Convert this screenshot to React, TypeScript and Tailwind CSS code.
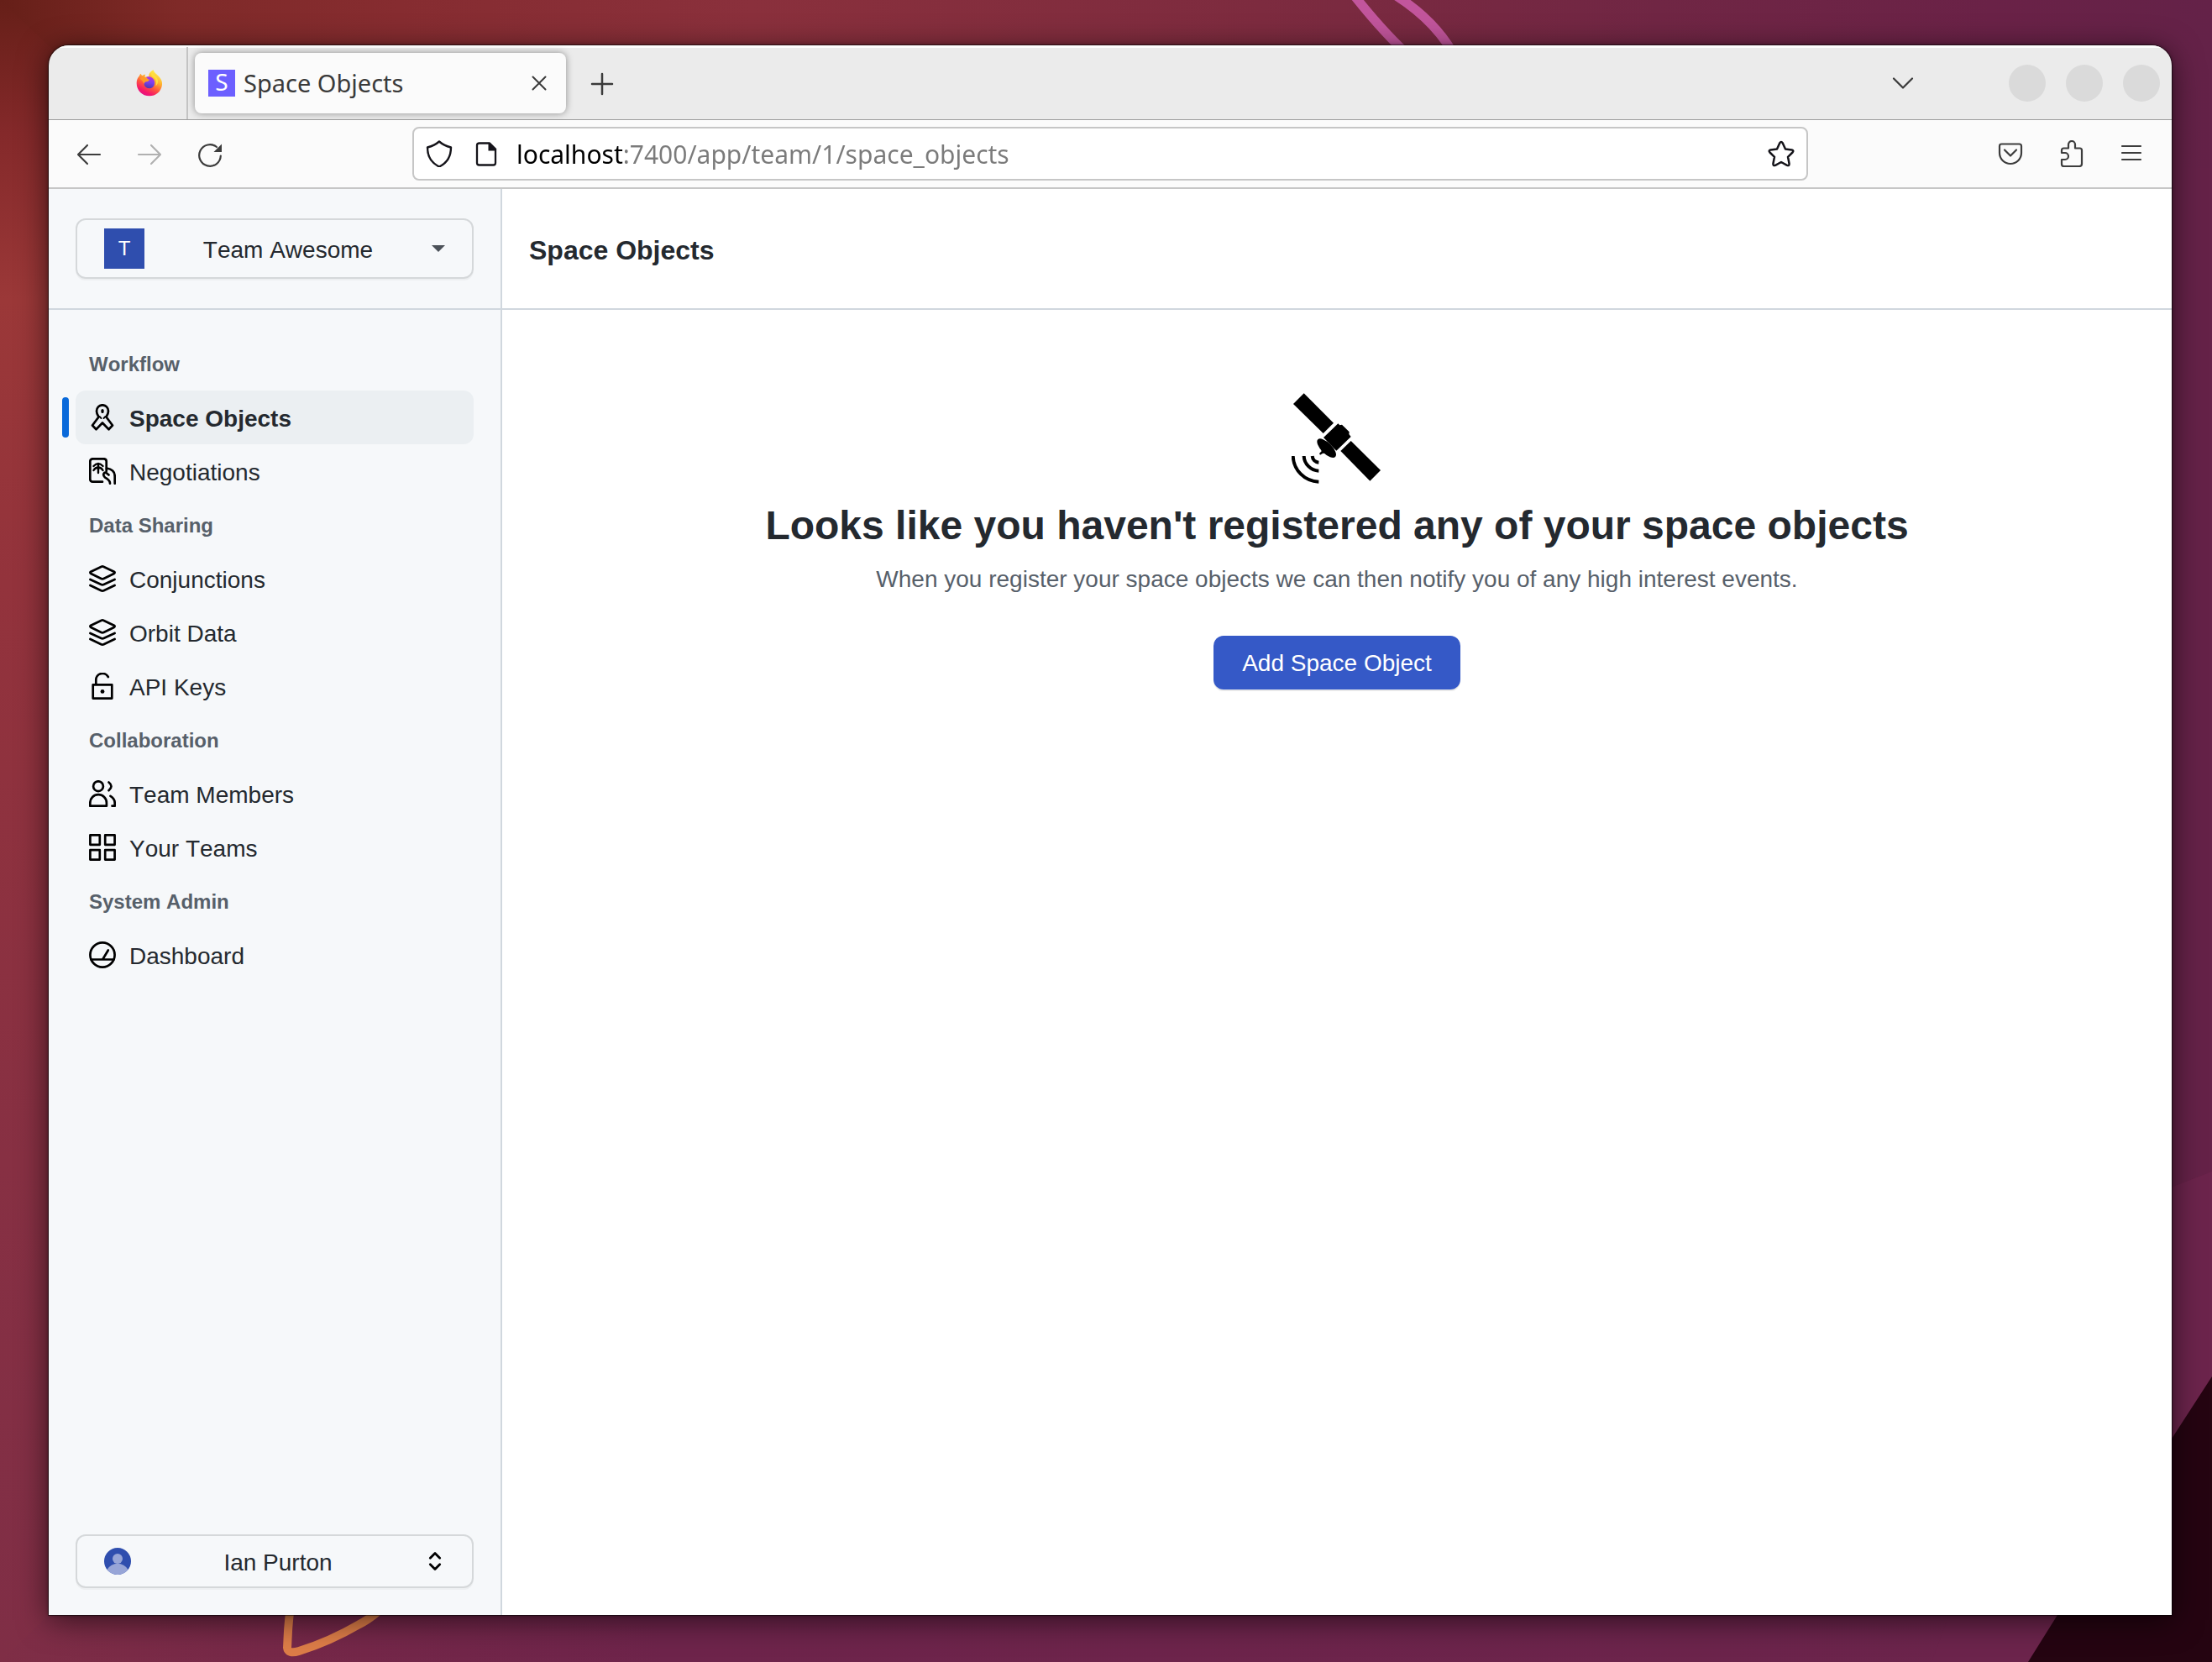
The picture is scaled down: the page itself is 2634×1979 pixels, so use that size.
import type { ReactNode } from "react";

function Icon({ children, className = "" }: { children: ReactNode; className?: string }) {
  return (
    <svg
      viewBox="0 0 32 32"
      className={`size-8 shrink-0 ${className}`}
      fill="none"
      stroke="currentColor"
      strokeWidth="2.7"
      strokeLinecap="round"
      strokeLinejoin="round"
      aria-hidden="true"
    >
      {children}
    </svg>
  );
}

/* ---------- Wallpaper ---------- */

function Wallpaper() {
  return (
    <svg
      className="absolute inset-0 size-full"
      viewBox="0 0 2634 1979"
      preserveAspectRatio="none"
      aria-hidden="true"
    >
      <defs>
        <linearGradient id="left" x1="0" y1="0" x2="0" y2="1">
          <stop offset="0" stopColor="#661f18" />
          <stop offset="0.08" stopColor="#84292a" />
          <stop offset="0.18" stopColor="#9b3838" />
          <stop offset="0.35" stopColor="#93333c" />
          <stop offset="0.7" stopColor="#873043" />
          <stop offset="1" stopColor="#7f2e46" />
        </linearGradient>
        <linearGradient id="top" x1="0" y1="0" x2="1" y2="0">
          <stop offset="0" stopColor="#661f18" />
          <stop offset="0.08" stopColor="#7f2a28" />
          <stop offset="0.18" stopColor="#862c30" />
          <stop offset="0.34" stopColor="#8a303c" />
          <stop offset="0.57" stopColor="#7d2b3f" />
          <stop offset="0.75" stopColor="#702644" />
          <stop offset="0.9" stopColor="#6a2247" />
          <stop offset="1" stopColor="#642248" />
        </linearGradient>
        <linearGradient id="bottom" x1="0" y1="0" x2="1" y2="0">
          <stop offset="0" stopColor="#7f2e46" />
          <stop offset="0.12" stopColor="#762848" />
          <stop offset="0.3" stopColor="#6e244b" />
          <stop offset="1" stopColor="#6b244c" />
        </linearGradient>
      </defs>
      <rect width="2634" height="1979" fill="#68234a" />
      <rect width="2634" height="300" fill="url(#top)" />
      <rect y="1850" width="2634" height="129" fill="url(#bottom)" />
      <path d="M0 0L64 60V1917L0 1979Z" fill="url(#left)" />
      <path d="M2500 200H2634V1395L2500 1447Z" fill="#652248" />
      <path d="M2500 1447L2634 1395V1979H2300Z" fill="#6c244c" />
      <path d="M2634 1639V1979H2415L2450 1923Z" fill="#250411" />
      <g fill="none" stroke="#c2559c" strokeWidth="11">
        <path d="M1612 -6Q1650 42 1682 70" />
        <path d="M1661 -6Q1712 26 1735 72" />
      </g>
      <path
        d="M348 1900C342 1935 343 1948 342 1962Q343 1970 356 1966C385 1957 404 1948 428 1934Q446 1925 468 1902"
        fill="none"
        stroke="#dd7d48"
        strokeWidth="10"
      />
    </svg>
  );
}

/* ---------- Browser chrome ---------- */

function FirefoxLogo() {
  return (
    <svg viewBox="0 0 96 96" className="size-8" aria-label="Firefox">
      <defs>
        <linearGradient id="ffBody" x1="0.8" y1="0.05" x2="0.3" y2="1">
          <stop offset="0" stopColor="#fff44f" />
          <stop offset="0.35" stopColor="#ffb02e" />
          <stop offset="0.6" stopColor="#ff5a3c" />
          <stop offset="0.85" stopColor="#f5156c" />
          <stop offset="1" stopColor="#e01587" />
        </linearGradient>
        <linearGradient id="ffGlobe" x1="0.6" y1="0" x2="0.4" y2="1">
          <stop offset="0" stopColor="#b833e1" />
          <stop offset="0.5" stopColor="#7a3ff0" />
          <stop offset="1" stopColor="#4b3aa8" />
        </linearGradient>
      </defs>
      <path
        d="M62 1C64 10 72 15 79 22C92 34 94 46 93 54C90 79 70 94 48 94C22 94 2 74 2 48C2 36 6 29 12 22C12 19 15 15 18 14C18 18 20 20 23 21C26 18 31 17 34 17C32 20 31 23 32 26L46 24C44 14 54 4 62 1Z"
        fill="url(#ffBody)"
      />
      <path d="M36 27C44 22 58 24 64 36C70 50 64 66 48 67C36 67 27 58 29 46C33 40 40 42 44 39C46 36 42 33 36 27Z" fill="url(#ffGlobe)" />
      <path d="M14 32C20 26 28 26 34 30C38 33 44 34 48 35C46 41 40 42 36 43C30 44 30 50 28 50C26 42 20 36 14 32Z" fill="#ff9a26" />
      <path d="M58 6C52 14 54 22 62 27C74 35 74 48 70 58C82 50 80 32 70 24C63 18 60 13 58 6Z" fill="#ffdf3d" />
    </svg>
  );
}

function TabStrip() {
  return (
    <div className="flex h-[89px] items-stretch border-b border-[#9e9e9e] bg-[#ebebeb] pt-0.5 pr-[14px] text-[#3a3a3a] shadow-[inset_0_3px_0_#fdfdfd]">
      <div className="flex w-[166px] items-center justify-end border-r-2 border-[#c4c4c4] pr-7">
        <FirefoxLogo />
      </div>
      <div
        role="tab"
        aria-selected="true"
        className="ml-2 flex w-[442px] items-center self-center rounded-lg bg-[#fbfbfb] px-4 py-5 shadow-[0_0_8px_rgba(0,0,0,0.4)]"
      >
        <span className="flex size-8 items-center justify-center bg-[#6c5fff] pb-1 font-['Noto_Sans'] text-[28px] leading-8 text-white">
          S
        </span>
        <span className="ml-[10px] flex-1 font-['Noto_Sans'] text-[29px] leading-8">Space Objects</span>
        <button type="button" aria-label="Close tab" className="size-8">
          <Icon>
            <path strokeWidth="2" d="M8.500 8.500L23.500 23.500M23.500 8.500L8.500 23.500" />
          </Icon>
        </button>
      </div>
      <button type="button" aria-label="New tab" className="ml-[27px] self-center">
        <Icon>
          <path strokeWidth="2.500" d="M16 5V29M4 17H28" />
        </Icon>
      </button>
      <div className="flex-1" />
      <button type="button" aria-label="List all tabs" className="self-center">
        <Icon>
          <path strokeWidth="2.200" d="M5 10.500L16 21.500L27 10.500" />
        </Icon>
      </button>
      <div className="ml-[110px] flex items-center gap-6">
        {["Minimize", "Maximize", "Close"].map((label) => (
          <button key={label} type="button" aria-label={label} className="size-11 rounded-full bg-[#dadada]" />
        ))}
      </div>
    </div>
  );
}

function Toolbar() {
  return (
    <div className="flex h-[82px] items-center border-b-2 border-[#c6c6c6] bg-[#fbfbfb] px-8 text-[#3d3d3d]">
      <div className="flex gap-10">
        <button type="button" aria-label="Back">
          <Icon>
            <path strokeWidth="2.200" d="M29 17H3M14 6L3 17L14 28" />
          </Icon>
        </button>
        <button type="button" aria-label="Forward" disabled className="text-[#b0b0b0]">
          <Icon>
            <path strokeWidth="2.200" d="M3 17H29M18 6L29 17L18 28" />
          </Icon>
        </button>
        <button type="button" aria-label="Reload">
          <Icon>
            <path strokeWidth="2.200" d="M28.800 18.500A12.800 12.800 0 1 1 24 8" />
            <path fill="currentColor" stroke="none" d="M30 4.500V14H20.500Z" />
          </Icon>
        </button>
      </div>
      <div className="mx-[225px] flex h-16 flex-1 items-center rounded-lg border-2 border-[#c6c6c6] bg-white px-[14px] text-[#15141a]">
        <Icon>
          <path strokeWidth="2.400" d="M16 1.500C20 5 24.500 7 30 8.500C30 19 26.500 26.500 16 31.500C5.500 26.500 2 19 2 8.500C7.500 7 12 5 16 1.500Z" />
        </Icon>
        <Icon className="ml-6">
          <path strokeWidth="2.300" d="M8 3.500H20L27 10.500V27Q27 29.500 24.500 29.500H7.500Q5 29.500 5 27V6Q5 3.500 8 3.500Z" />
          <path fill="currentColor" stroke="none" d="M18.500 3H20.500L28 10.500V12.500H18.500Z" />
        </Icon>
        <input
          type="text"
          aria-label="Address"
          readOnly
          value="localhost:7400/app/team/1/space_objects"
          className="ml-5 min-w-0 flex-1 bg-[linear-gradient(to_right,#000_127px,#7b7b7b_127px)] bg-clip-text pt-0.5 font-['Noto_Sans'] text-[30px] leading-10 text-transparent outline-none"
        />
        <button type="button" aria-label="Bookmark this page">
          <Icon>
            <path
              strokeWidth="2.500"
              d="M14.300 3.200Q16 0.800 17.700 3.200L21 10.500L28.600 11.400Q31.500 12.300 29.500 14.500L24 19.800L25.600 28Q25.600 30.800 23 29.900L16 26L9 29.900Q6.400 30.800 6.400 28L8 19.800L2.500 14.500Q0.500 12.300 3.400 11.400L11 10.500Z"
            />
          </Icon>
        </button>
      </div>
      <div className="flex gap-10">
        <button type="button" aria-label="Save to Pocket">
          <Icon>
            <path strokeWidth="2.200" d="M5.500 4.500H26.500Q29 4.500 29 7V15A13 13 0 0 1 3 15V7Q3 4.500 5.500 4.500Z" />
            <path strokeWidth="2.200" d="M9 11.500L16 18.500L23 11.500" />
          </Icon>
        </button>
        <button type="button" aria-label="Extensions">
          <Icon>
            <path
              strokeWidth="2.200"
              d="M13 9.500V5A4 4 0 0 1 21 5V9.500H26.500Q29 9.500 29 12V28Q29 31 26 31H7.500Q5 31 5 28.500V23H9A4 4 0 0 0 9 15H5V12Q5 9.500 7.500 9.500Z"
            />
          </Icon>
        </button>
        <button type="button" aria-label="Open application menu">
          <Icon>
            <path strokeWidth="2.200" d="M5 7H27M5 15H27M5 23H27" />
          </Icon>
        </button>
      </div>
    </div>
  );
}

/* ---------- Sidebar ---------- */

const icons = {
  ribbon: (
    <Icon>
      <path d="M11.500 15.500C9.500 12.500 9 10.500 9 8.500A7 7.200 0 0 1 23 8.500C23 10.500 22.500 12.500 20.500 15.500L28 25.500L23.500 30.300L16 22.500L8.500 30.300L4 25.500L11.500 15.500Z" />
      <path strokeWidth="3.200" d="M16 7.500V9.500" />
      <path strokeWidth="1.800" d="M12.500 15L14.500 17M19.500 15L17.500 17" />
    </Icon>
  ),
  handshake: (
    <Icon>
      <path d="M16 28.700H4.500Q1.300 28.700 1.300 25.500V4.500Q1.300 1.300 4.500 1.300H17.500Q20.700 1.300 20.700 4.500V16" />
      <path strokeWidth="2.400" d="M11 7V18M5.500 10Q11 3.800 16.500 10M5.500 15Q7.500 11.500 11 11.500Q14.500 11.500 16.500 15" />
      <path d="M21 12.500C28 13.500 30.700 17.500 30.700 22V30.700M25 30.700C25 26.500 22 25.500 19 23.500C15.500 20 18 17 20.500 18L23.500 20.500" />
    </Icon>
  ),
  layers: (
    <Icon>
      <path d="M14.800 1.700Q16 1.200 17.200 1.700L29.800 7.700Q31.500 8.800 29.800 10L17.500 16Q16 16.700 14.500 16L2.200 10Q0.500 8.800 2.200 7.700Z" />
      <path d="M1.400 17L14.500 23Q16 23.700 17.500 23L30.600 17" />
      <path d="M1.400 24L14.500 30.200Q16 30.900 17.500 30.200L30.600 24" />
    </Icon>
  ),
  unlock: (
    <Icon>
      <path d="M4.700 14.300H27.300V30.600H4.700ZM8.300 14V9A7.700 7.700 0 0 1 22.800 5" />
      <circle cx="16" cy="22.400" r="2.400" fill="currentColor" stroke="none" />
    </Icon>
  ),
  members: (
    <Icon>
      <circle cx="11" cy="7.200" r="5.900" />
      <path d="M1.300 30.700V27A9.800 9.800 0 0 1 20.900 27V30.700ZM23.500 2.500Q29.500 7.200 23.500 12.200M25.500 18.800Q30.700 22 30.700 27V30.700H27.500" />
    </Icon>
  ),
  grid: (
    <Icon>
      <path d="M1.400 1.400H12.800V12.800H1.400ZM19.200 1.400H30.600V12.800H19.200ZM1.400 19.200H12.800V30.600H1.400ZM19.200 19.200H30.600V30.600H19.200Z" />
    </Icon>
  ),
  gauge: (
    <Icon>
      <circle cx="16" cy="16" r="14.600" />
      <path d="M2.500 21.500H29.500M16.500 21L22.800 10.500" />
    </Icon>
  ),
};

type NavItem = { label: string; icon: keyof typeof icons; active?: boolean };

const sections: { title: string; items: NavItem[] }[] = [
  {
    title: "Workflow",
    items: [
      { label: "Space Objects", icon: "ribbon", active: true },
      { label: "Negotiations", icon: "handshake" },
    ],
  },
  {
    title: "Data Sharing",
    items: [
      { label: "Conjunctions", icon: "layers" },
      { label: "Orbit Data", icon: "layers" },
      { label: "API Keys", icon: "unlock" },
    ],
  },
  {
    title: "Collaboration",
    items: [
      { label: "Team Members", icon: "members" },
      { label: "Your Teams", icon: "grid" },
    ],
  },
  { title: "System Admin", items: [{ label: "Dashboard", icon: "gauge" }] },
];

function Sidebar() {
  return (
    <aside className="flex w-[540px] shrink-0 flex-col border-r-2 border-[#d0d7de] bg-[#f6f8fa]">
      <div className="flex h-36 items-center border-b-2 border-[#d0d7de] px-8">
        <button
          type="button"
          aria-haspopup="menu"
          className="flex h-[72px] w-full items-center justify-between rounded-xl border-2 border-[#d5d8da] px-8 shadow-[0_2px_0_rgba(27,31,36,0.04)]"
        >
          <span className="flex size-12 items-center justify-center bg-[#2f4eae] text-2xl text-white">T</span>
          <span className="pt-[3px]">Team Awesome</span>
          <svg viewBox="0 0 16 8" className="h-2 w-4" aria-hidden="true">
            <path d="M0 0H16L8 8Z" fill="#4b5158" />
          </svg>
        </button>
      </div>
      <nav className="flex-1 px-8 pt-8">
        {sections.map((section) => (
          <section key={section.title}>
            <h2 className="px-4 pt-0.5 text-2xl leading-[62px] font-bold text-[#57606a]">{section.title}</h2>
            <ul>
              {section.items.map((item) => (
                <li key={item.label} className="relative">
                  {item.active && <span className="absolute top-2 -left-4 h-12 w-2 rounded-full bg-[#0969da]" />}
                  <a
                    href="#"
                    aria-current={item.active ? "page" : undefined}
                    className={`flex h-16 items-center gap-4 rounded-xl px-4 ${item.active ? "bg-[#ebeff2] font-bold" : ""}`}
                  >
                    <span className="text-black">{icons[item.icon]}</span>
                    <span className="pt-[3px]">{item.label}</span>
                  </a>
                </li>
              ))}
            </ul>
          </section>
        ))}
      </nav>
      <div className="p-8">
        <button
          type="button"
          aria-haspopup="menu"
          className="flex h-16 w-full items-center justify-between rounded-xl border-2 border-[#d5d8da] px-8 shadow-[0_2px_0_rgba(27,31,36,0.04)]"
        >
          <svg viewBox="0 0 32 32" className="size-8" aria-hidden="true">
            <circle cx="16" cy="16" r="16" fill="#2f4eae" />
            <circle cx="16" cy="13" r="6" fill="#97a5d7" />
            <path d="M3.500 26A14.500 14.500 0 0 1 28.500 26A16 16 0 0 1 3.500 26Z" fill="#97a5d7" />
          </svg>
          <span className="pt-[3px]">Ian Purton</span>
          <svg
            viewBox="0 0 24 32"
            className="h-8 w-6"
            fill="none"
            stroke="#000"
            strokeWidth="2.800"
            strokeLinecap="round"
            strokeLinejoin="round"
            aria-hidden="true"
          >
            <path d="M6.300 12.300L12 6.600L17.700 12.300M6.300 19.700L12 25.400L17.700 19.700" />
          </svg>
        </button>
      </div>
    </aside>
  );
}

/* ---------- Main ---------- */

function Satellite() {
  return (
    <svg viewBox="54 54 324 324" className="size-[108px]" aria-hidden="true">
      <path d="M98 55L204 161L167 198L60 93Z" />
      <path d="M220 163L226 169L234 167L260 193L259 201L266 210L214 260L168 213Z" />
      <path d="M266 225L372 330L334 368L229 261Z" />
      <ellipse cx="179" cy="251" rx="44" ry="19" transform="rotate(45 179 251)" />
      <path d="M158 250L161 262L153 270L156 275L166 269L180 271Z" />
      <g fill="none" stroke="#000" strokeWidth="12">
        <path d="M59 279C61 330 100 369 151 371" />
        <path d="M98 279C99 307 122 331 151 332" />
        <path d="M128 279C129 292 138 301 151 302" />
      </g>
    </svg>
  );
}

function Main() {
  return (
    <main className="flex min-w-0 flex-1 flex-col bg-white">
      <header className="flex h-36 items-center border-b-2 border-[#d0d7de] px-8">
        <h1 className="pt-[3px] text-[32px] leading-10 font-bold">Space Objects</h1>
      </header>
      <section className="flex flex-1 flex-col items-center pt-[99px] text-center">
        <Satellite />
        <h2 className="mt-[14px] text-5xl leading-[72px] font-bold">
          Looks like you haven't registered any of your space objects
        </h2>
        <p className="mt-[7px] leading-[42px] text-[#57606a]">
          When you register your space objects we can then notify you of any high interest events.
        </p>
        <button
          type="button"
          className="mt-[46px] h-16 rounded-xl bg-[#3559c7] px-[34px] pt-0.5 text-white shadow-[0_2px_0_rgba(27,31,36,0.1)]"
        >
          Add Space Object
        </button>
      </section>
    </main>
  );
}

export default function App() {
  return (
    <div className="relative flex min-h-screen overflow-hidden pt-[54px] pr-12 pb-14 pl-[58px]">
      <Wallpaper />
      <div className="relative flex min-w-0 flex-1 flex-col rounded-t-3xl shadow-[0_0_0_1px_rgba(0,0,0,0.45),0_0_4px_rgba(0,0,0,0.5),0_6px_36px_rgba(0,0,0,0.6)]">
        <div className="flex flex-1 flex-col overflow-hidden rounded-t-3xl font-['Liberation_Sans',Arial,sans-serif] text-[28px] leading-[42px] text-[#24292f] [font-kerning:none]">
          <TabStrip />
          <Toolbar />
          <div className="flex flex-1">
            <Sidebar />
            <Main />
          </div>
        </div>
      </div>
    </div>
  );
}
